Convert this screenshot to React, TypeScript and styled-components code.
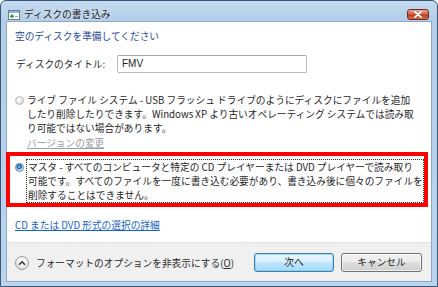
import React from "react";
import styled, { createGlobalStyle } from "styled-components";

const GlobalStyle = createGlobalStyle`
  html, body {
    margin: 0;
    padding: 0;
    background: #ffffff;
  }
  body {
    font-family: "Noto Sans CJK JP", "Liberation Sans", sans-serif;
    font-size: 9.7px;
    color: #1f1f1f;
  }
`;

const Window = styled.div`
  width: 438px;
  height: 287px;
  box-sizing: border-box;
  border: 1px solid #3b5677;
  border-radius: 6px 6px 0 0;
  background: linear-gradient(180deg, #c6dbf0 0%, #b3cee9 18px, #b8d2ec 60%, #bcd5ee 100%);
  padding: 0 5px 4px 5px;
  display: flex;
  flex-direction: column;
`;

const TitleBar = styled.div`
  height: 20px;
  box-sizing: border-box;
  padding: 6px 0 0 2px;
  display: flex;
  align-items: flex-start;
  gap: 4px;
`;

const TitleIcon = styled.svg`
  width: 12px;
  height: 10px;
  margin-top: 3px;
  flex: none;
`;

const TitleText = styled.div`
  flex: 1;
  line-height: 14px;
  color: #1a1a1a;
  text-shadow: 0 0 4px rgba(255, 255, 255, 0.9);
`;

const CloseButton = styled.div`
  width: 22px;
  height: 11px;
  margin: 2px 3px 0 0;
  box-sizing: border-box;
  border: 1px solid #6e2a22;
  border-radius: 3px;
  background: linear-gradient(180deg, #e9a99a 0%, #d2624d 45%, #c0391f 55%, #d86f4d 100%);
  display: flex;
  align-items: center;
  justify-content: center;
`;

const Client = styled.div`
  flex: 1;
  background: #ffffff;
  border: 1px solid #8ea8c6;
  display: flex;
  flex-direction: column;
`;

const Main = styled.div`
  flex: 1;
  padding: 7px 9px 0 8px;
  display: flex;
  flex-direction: column;
`;

const Instruction = styled.div`
  line-height: 14px;
  color: #1f4a9c;
`;

const TitleRow = styled.div`
  margin-top: 12px;
  display: flex;
  align-items: center;
`;

const FieldLabel = styled.div`
  width: 101px;
  padding-left: 1px;
  line-height: 14px;
`;

const TextBox = styled.div`
  width: 190px;
  height: 18px;
  box-sizing: border-box;
  border: 1px solid #b5b8c0;
  border-top-color: #a0a4ab;
  border-radius: 2px;
  padding: 0 4px;
  line-height: 16px;
  font-family: "Liberation Sans", "Noto Sans CJK JP", sans-serif;
  font-size: 10px;
`;

const Option = styled.div<{ $top: number }>`
  margin-top: ${(p) => p.$top}px;
  display: flex;
  align-items: flex-start;
`;

const Radio = styled.div<{ $checked?: boolean }>`
  width: 7px;
  height: 7px;
  flex: none;
  margin: 3px 3px 0 0;
  border-radius: 50%;
  border: 1px solid ${(p) => (p.$checked ? "#5f7f9c" : "#b7b7b7")};
  background: ${(p) =>
    p.$checked
      ? "radial-gradient(circle at 45% 40%, #8fd0ff 0, #2d86d2 1.5px, #1b5d9d 2.5px, #dfe8ef 3px, #f4f4f4 100%)"
      : "radial-gradient(circle at 45% 40%, #ffffff 0, #e4e4e4 60%, #d0d0d0 100%)"};
`;

const OptionText = styled.div<{ $focused?: boolean }>`
  line-height: 14px;
  white-space: nowrap;
  ${(p) =>
    p.$focused
      ? `
    flex: 1;
    border: 1px dotted #333;
    padding: 0 0 0 1px;
  `
      : ""}
`;

const SubLink = styled.a`
  margin: 1px 0 0 12px;
  line-height: 14px;
  color: #9b9b9b;
  text-decoration: underline;
  align-self: flex-start;
`;

const Highlight = styled.div`
  margin: 2px 0 0 -9px;
  width: 422px;
  height: 55px;
  box-sizing: border-box;
  border: 4px solid #ff0000;
  padding: 3px 2px 0 5px;
`;

const HighlightOption = styled.div`
  display: flex;
  align-items: flex-start;
`;

const FocusRadio = styled(Radio)`
  margin: 4px 2px 0 0;
`;

const DetailLink = styled.a`
  margin-top: 11px;
  line-height: 14px;
  color: #1763c9;
  text-decoration: underline;
  align-self: flex-start;
`;

const Footer = styled.div`
  height: 39px;
  box-sizing: border-box;
  background: #f0f0f0;
  border-top: 1px solid #e2e2e2;
  padding: 0 9px 0 8px;
  display: flex;
  align-items: center;
`;

const ChevronButton = styled.div`
  width: 14px;
  height: 14px;
  margin-top: 2px;
  box-sizing: border-box;
  border-radius: 50%;
  border: 1px solid #9a9a9a;
  background: radial-gradient(circle at 50% 35%, #ffffff 0, #ececec 55%, #cfcfcf 100%);
  display: flex;
  align-items: center;
  justify-content: center;
`;

const FooterText = styled.div`
  margin: 2px 0 0 7px;
  flex: 1;
  line-height: 14px;
  color: #2a2a2a;
`;

const Button = styled.div<{ $primary?: boolean; $width: number }>`
  width: ${(p) => p.$width}px;
  height: 19px;
  box-sizing: border-box;
  margin-left: 7px;
  border-radius: 3px;
  border: 1px solid ${(p) => (p.$primary ? "#3c7fb1" : "#707070")};
  background: ${(p) =>
    p.$primary
      ? "linear-gradient(180deg, #eaf6fd 0%, #d9f0fc 45%, #bee6fd 50%, #a7d9f5 100%)"
      : "linear-gradient(180deg, #f2f2f2 0%, #ebebeb 45%, #dddddd 50%, #cfcfcf 100%)"};
  box-shadow: inset 0 0 0 1px ${(p) => (p.$primary ? "rgba(120, 200, 240, 0.6)" : "rgba(255, 255, 255, 0.7)")};
  display: flex;
  align-items: center;
  justify-content: center;
  line-height: 14px;
  color: #222;
`;

const Underlined = styled.span`
  text-decoration: underline;
`;

const App: React.FC = () => {
  return (
    <>
      <GlobalStyle />
      <Window>
        <TitleBar>
          <TitleIcon viewBox="0 0 12 10">
            <rect x="0.5" y="0.5" width="11" height="9" fill="#ffffff" stroke="#6c7f93" />
            <rect x="1" y="1" width="10" height="2" fill="#8fb3d9" />
            <path d="M2 6.2h4M4 4.2v4" stroke="#2f9a2f" strokeWidth="1.4" />
            <path d="M7 6.5h3" stroke="#9aa6b2" strokeWidth="1" />
          </TitleIcon>
          <TitleText>ディスクの書き込み</TitleText>
          <CloseButton>
            <svg width="10" height="7" viewBox="0 0 10 7">
              <path d="M2 0.8l6 5.4M8 0.8l-6 5.4" stroke="#ffffff" strokeWidth="1.8" strokeLinecap="round" />
            </svg>
          </CloseButton>
        </TitleBar>
        <Client>
          <Main>
            <Instruction>空のディスクを準備してください</Instruction>
            <TitleRow>
              <FieldLabel>ディスクのタイトル:</FieldLabel>
              <TextBox>FMV</TextBox>
            </TitleRow>
            <Option $top={20}>
              <Radio />
              <OptionText>
                ライブ ファイル システム - USB フラッシュ ドライブのようにディスクにファイルを追加
                <br />
                したり削除したりできます。Windows XP より古いオペレーティング システムでは読み取
                <br />
                り可能ではない場合があります。
              </OptionText>
            </Option>
            <SubLink>バージョンの変更</SubLink>
            <Highlight>
              <HighlightOption>
                <FocusRadio $checked />
                <OptionText $focused>
                  マスタ - すべてのコンピュータと特定の CD プレイヤーまたは DVD プレイヤーで読み取り
                  <br />
                  可能です。すべてのファイルを一度に書き込む必要があり、書き込み後に個々のファイルを
                  <br />
                  削除することはできません。
                </OptionText>
              </HighlightOption>
            </Highlight>
            <DetailLink>CD または DVD 形式の選択の詳細</DetailLink>
          </Main>
          <Footer>
            <ChevronButton>
              <svg width="8" height="6" viewBox="0 0 8 6">
                <path d="M1 4.8L4 1.8l3 3" stroke="#333" strokeWidth="1.6" fill="none" />
              </svg>
            </ChevronButton>
            <FooterText>
              フォーマットのオプションを非表示にする(<Underlined>O</Underlined>)
            </FooterText>
            <Button $primary $width={80}>
              次へ
            </Button>
            <Button $width={81}>キャンセル</Button>
          </Footer>
        </Client>
      </Window>
    </>
  );
};

export default App;
